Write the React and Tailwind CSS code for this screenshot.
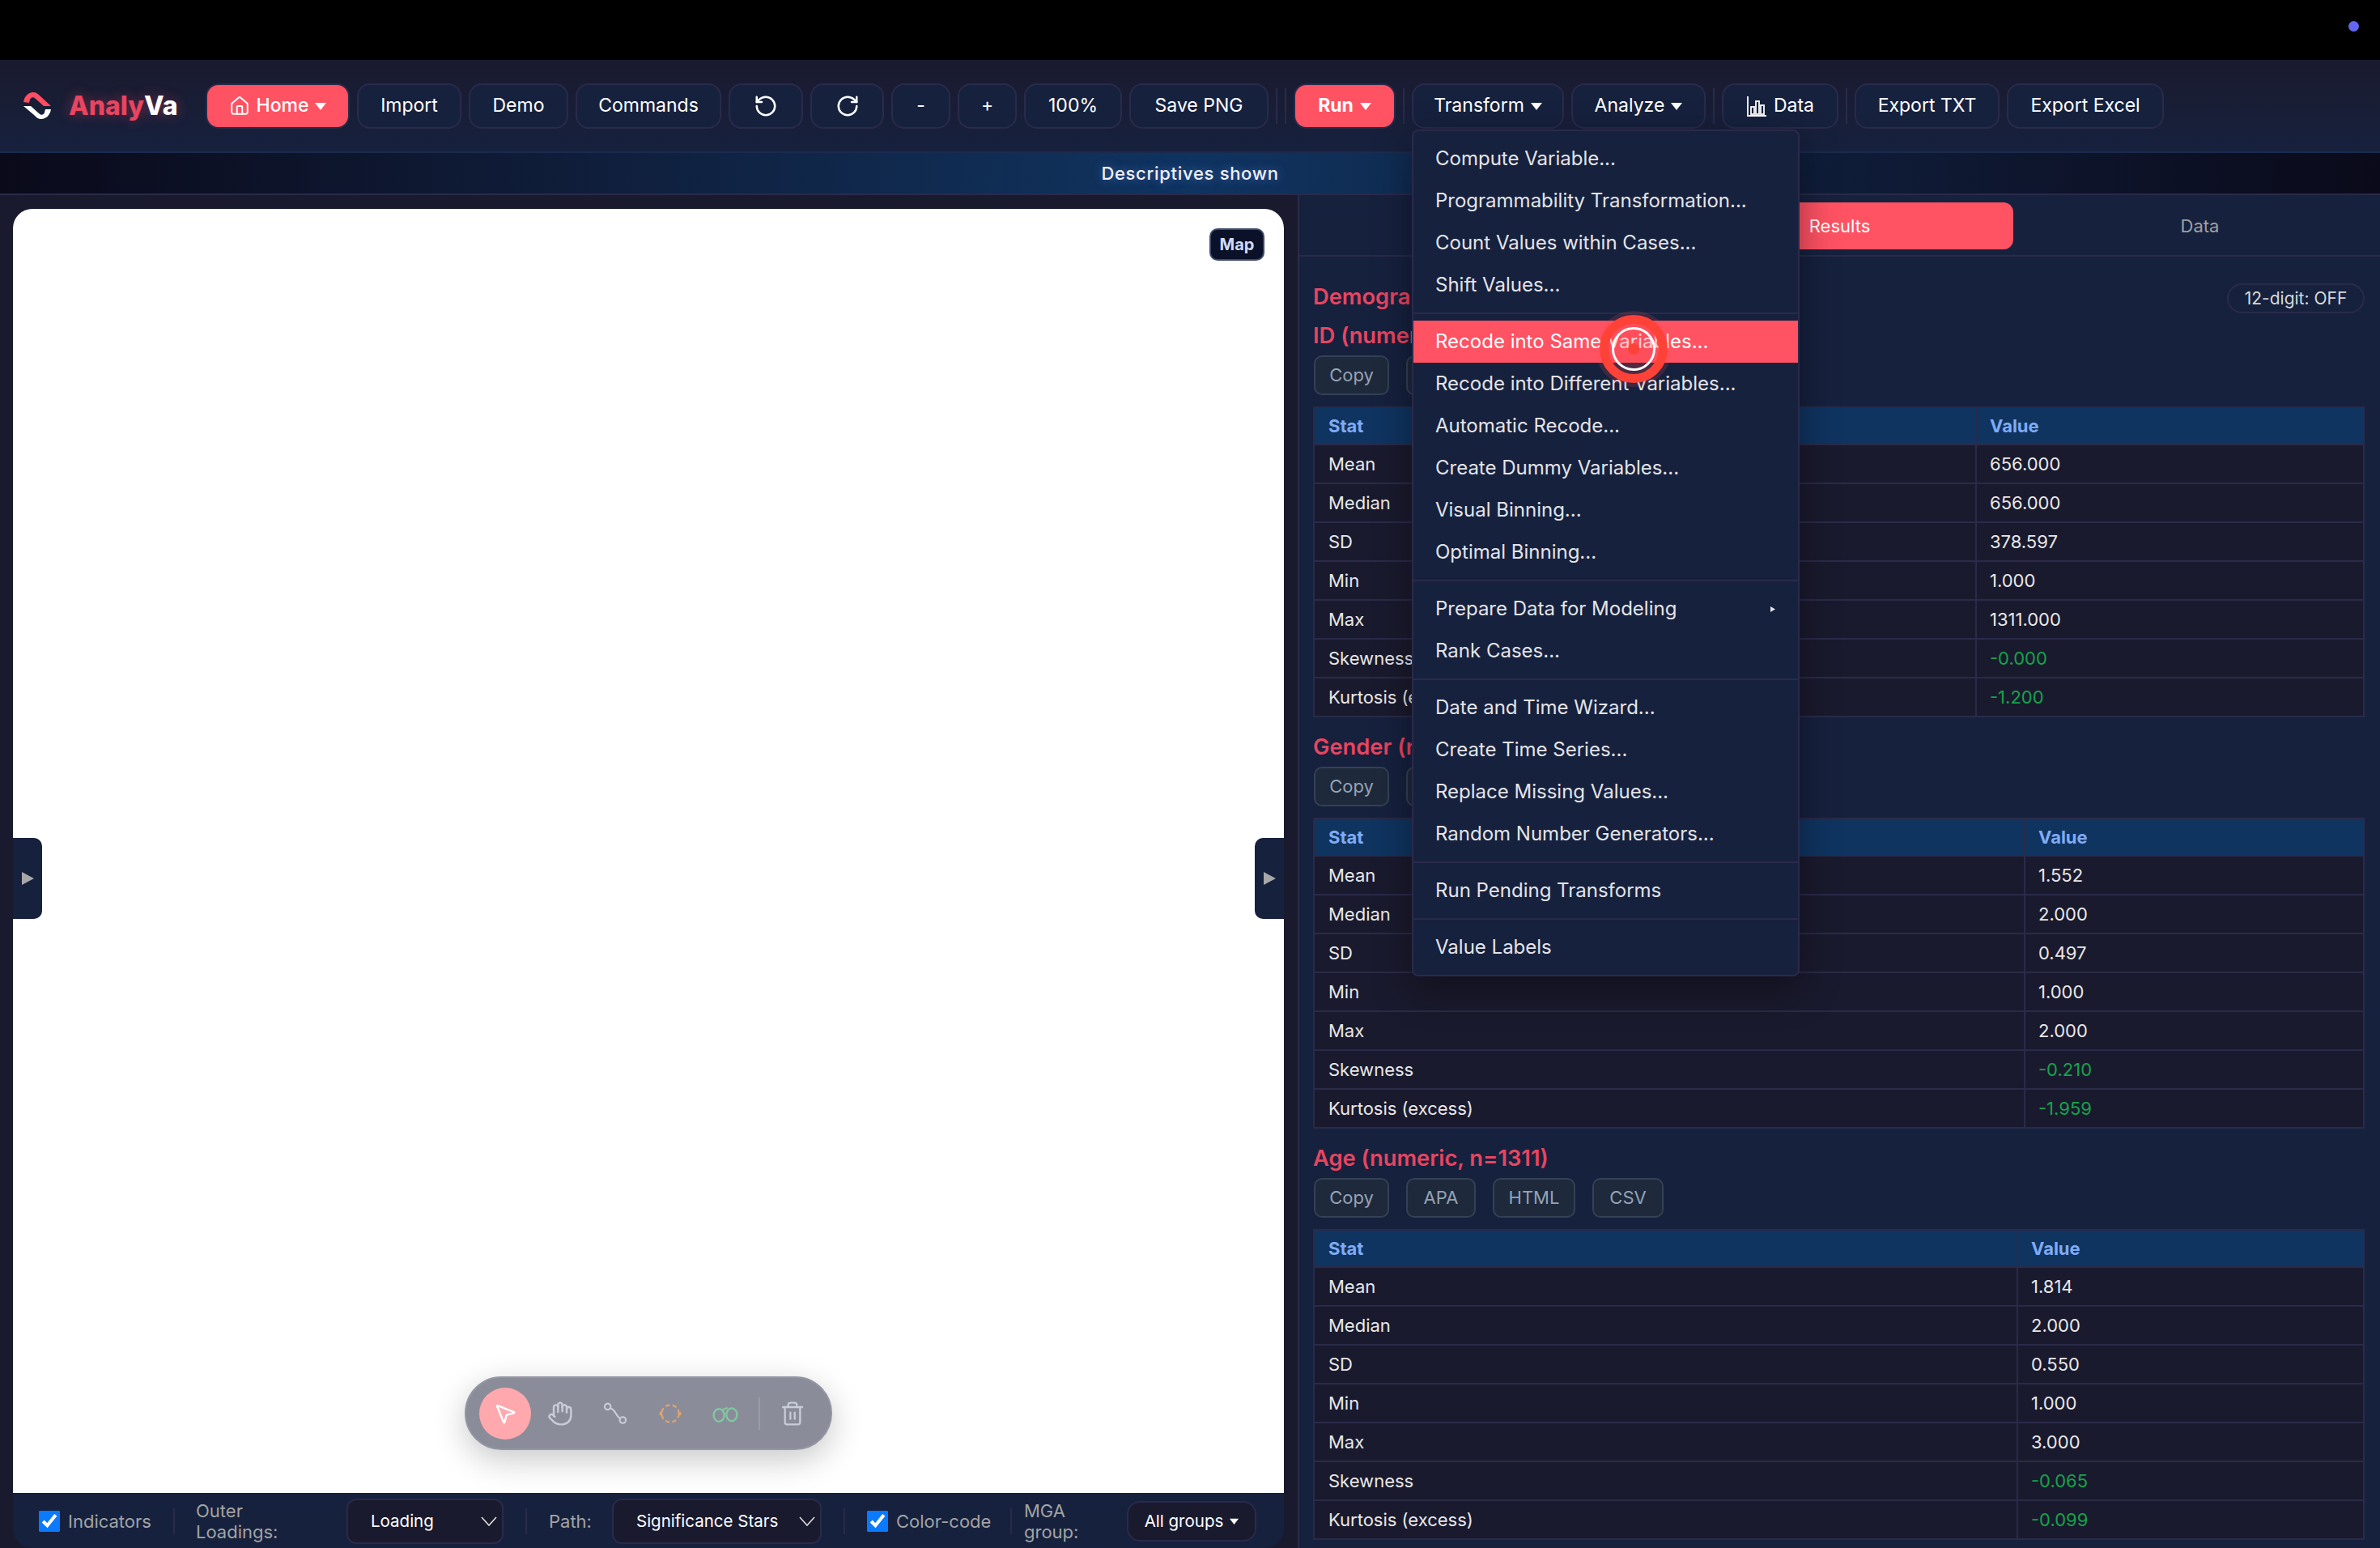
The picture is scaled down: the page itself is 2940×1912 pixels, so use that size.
import React from 'react';
import { House, RotateCcw, RotateCw, MousePointer2, Hand, Trash2 } from 'lucide-react';

const Caret = ({ className = '' }) => (
    <svg width="14" height="10" viewBox="0 0 14 10" className={className}>
        <path d="M0 1h14L7 10z" fill="currentColor" />
    </svg>
);

const SelectChevron = () => (
    <svg width="20" height="12" viewBox="0 0 20 12" fill="none" stroke="#dddddd" strokeWidth="1.6" className="shrink-0">
        <path d="M1 1l9 10 9-10" />
    </svg>
);

const SideArrow = () => (
    <svg width="15" height="16" viewBox="0 0 15 16"><path d="M0 0l15 8-15 8z" fill="currentColor" /></svg>
);

const Sep = () => <div className="w-[2px] h-[44px] bg-[#2a2a4a] shrink-0"></div>;

const Btn = ({ w, red, children }) => (
    <button className={`${w} h-[56px] shrink-0 flex items-center justify-center gap-[8px] rounded-[16px] border-2 text-[23px] ${red ? 'bg-[#ff5263] border-[#2a2a4a] font-bold text-white' : 'bg-[#16213e] border-[#2a2a4a] text-white'}`}>
        {children}
    </button>
);

const DataIcon = () => (
    <svg width="26" height="30" viewBox="0 0 26 30" fill="none" stroke="currentColor" strokeWidth="1.8">
        <path d="M2 3v24h23" />
        <rect x="6" y="16" width="4" height="9" />
        <rect x="12" y="9" width="4" height="16" />
        <rect x="18" y="14" width="4" height="11" />
    </svg>
);

const Logo = () => (
    <svg width="34" height="34" viewBox="0 0 34 34" className="shrink-0">
        <path d="M0 12C1 5 6 0 12 0c4 0 6 2 9 5l13 12h-9L15 8c-3-3-6-2-7 1l-1 4z" fill="#ff4d63" />
        <path d="M0 17h9l10 9c3 3 6 2 7-1l1-4h7c-1 7-6 12-12 12-4 0-6-2-9-5z" fill="#ffffff" />
    </svg>
);

const menuGroups = [
    ['Compute Variable...', 'Programmability Transformation...', 'Count Values within Cases...', 'Shift Values...'],
    ['Recode into Same Variables...', 'Recode into Different Variables...', 'Automatic Recode...', 'Create Dummy Variables...', 'Visual Binning...', 'Optimal Binning...'],
    ['Prepare Data for Modeling', 'Rank Cases...'],
    ['Date and Time Wizard...', 'Create Time Series...', 'Replace Missing Values...', 'Random Number Generators...'],
    ['Run Pending Transforms'],
    ['Value Labels'],
];

const sections = [
    { title: 'ID (numeric, n=1311)', col: 'w-[816px]', values: ['656.000', '656.000', '378.597', '1.000', '1311.000', '-0.000', '-1.200'] },
    { title: 'Gender (numeric, n=1311)', col: 'w-[876px]', values: ['1.552', '2.000', '0.497', '1.000', '2.000', '-0.210', '-1.959'] },
    { title: 'Age (numeric, n=1311)', col: 'w-[867px]', values: ['1.814', '2.000', '0.550', '1.000', '3.000', '-0.065', '-0.099'] },
];
const statNames = ['Mean', 'Median', 'SD', 'Min', 'Max', 'Skewness', 'Kurtosis (excess)'];

const StatSection = ({ section }) => (
    <div className="mb-[21px]">
        <h3 className="h-[32px] mb-[8px] flex items-center text-[27.3px] font-semibold text-[#e94560]">{section.title}</h3>
        <div className="flex gap-[21px] mb-[14px] ml-[1px]">
            {[['Copy', 'w-[93px]'], ['APA', 'w-[86px]'], ['HTML', 'w-[102px]'], ['CSV', 'w-[88px]']].map(([label, w]) => (
                <button key={label} className={`${w} h-[49px] rounded-[10px] border-2 border-[#334155] bg-[#1e293b] text-[22px] text-[#94a3b8]`}>{label}</button>
            ))}
        </div>
        <div className="border-2 border-b-0 border-[#2a2a4a]">
            <table className="w-full table-fixed border-separate border-spacing-0 text-[22px] text-[#e8e8e8]">
                <thead>
                    <tr className="bg-[#0f3460] text-[#7fabf5] font-bold text-left">
                        <th className={`${section.col} h-[46px] pl-[17px] pr-[16px] border-b-2 border-[#2a2a4a]`}>Stat</th>
                        <th className="h-[46px] px-[16px] border-b-2 border-l-2 border-[#2a2a4a]">Value</th>
                    </tr>
                </thead>
                <tbody>
                    {statNames.map((name, i) => (
                        <tr key={name} className="bg-[#1a1a2e]">
                            <td className="h-[48px] pl-[17px] pr-[16px] border-b-2 border-[#2a2a4a]">{name}</td>
                            <td className={`h-[48px] px-[16px] border-b-2 border-l-2 border-[#2a2a4a] ${i > 4 ? 'text-[#16a34a]' : ''}`}>{section.values[i]}</td>
                        </tr>
                    ))}
                </tbody>
            </table>
        </div>
    </div>
);

const App = () => {
    return (
        <div className="relative w-full h-screen overflow-hidden flex flex-col bg-[#1a1a2e] font-['Inter',sans-serif]">
            {/* top black strip */}
            <div className="h-[74px] shrink-0 bg-black flex justify-end items-center pr-[26px] pb-[10px]">
                <div className="w-[13px] h-[13px] rounded-full bg-[#6366f1]"></div>
            </div>

            {/* toolbar */}
            <div className="h-[113px] shrink-0 flex items-center gap-[9px] pl-[29px] bg-gradient-to-b from-[#1a1a2e] to-[#16213e]">
                <div className="w-[216px] shrink-0 flex items-center gap-[22px] text-[32px] font-extrabold [text-shadow:0_0_16px_rgba(233,69,96,0.45)]">
                    <Logo />
                    <span className="text-[#e94560]">Analy<span className="text-white">Va</span></span>
                </div>
                <Btn w="w-[178px]" red><House size={26} strokeWidth={1.8} /><span className="font-medium">Home</span><Caret /></Btn>
                <Btn w="w-[129px]">Import</Btn>
                <Btn w="w-[123px]">Demo</Btn>
                <Btn w="w-[180px]">Commands</Btn>
                <Btn w="w-[92px]"><RotateCcw size={30} strokeWidth={2} /></Btn>
                <Btn w="w-[91px]"><RotateCw size={30} strokeWidth={2} /></Btn>
                <Btn w="w-[73px]">-</Btn>
                <Btn w="w-[73px]">+</Btn>
                <Btn w="w-[121px]">100%</Btn>
                <Btn w="w-[172px]">Save PNG</Btn>
                <Sep />
                <Sep />
                <Btn w="w-[126px]" red>Run<Caret /></Btn>
                <Sep />
                <Btn w="w-[188px]">Transform<Caret /></Btn>
                <Btn w="w-[166px]">Analyze<Caret /></Btn>
                <Sep />
                <Btn w="w-[144px]"><DataIcon />Data</Btn>
                <Sep />
                <Btn w="w-[179px]">Export TXT</Btn>
                <Btn w="w-[194px]">Export Excel</Btn>
            </div>

            {/* status strip */}
            <div className="h-[54px] shrink-0 flex items-center justify-center border-y-2 border-[#1a2a4e] border-b-[#2a2a4a] bg-gradient-to-r from-[#0a0a1a] via-[#0f3460] to-[#0a0a1a] text-[22px] font-medium tracking-[0.7px] text-[#f0f0f5] [text-shadow:0_0_12px_rgba(120,150,255,0.5)]">
                Descriptives shown
            </div>

            <div className="flex-1 min-h-0 flex">
                {/* canvas column */}
                <div className="w-[1603px] shrink-0 pl-[16px] pr-[17px] pt-[17px] flex flex-col">
                    <div className="relative flex-1 bg-white rounded-t-[24px]">
                        <div className="absolute top-[24px] right-[24px] w-[68px] h-[40px] flex items-center justify-center rounded-[10px] border-2 border-[#3d4a68] bg-[#0a1128] text-[20px] font-bold text-[#cfdcf5]">Map</div>
                        <div className="absolute left-0 top-[777px] w-[36px] h-[100px] flex items-center justify-center rounded-r-[10px] bg-[#16213e] text-[#a8a8a8]">
                            <SideArrow />
                        </div>
                        <div className="absolute right-0 top-[777px] w-[36px] h-[100px] flex items-center justify-center rounded-l-[10px] bg-[#16213e] text-[#a8a8a8]">
                            <SideArrow />
                        </div>

                        {/* floating tool pill */}
                        <div className="absolute left-[558px] top-[1442px] w-[454px] h-[91px] flex items-center pl-[16px] rounded-full border-2 border-[#9396a3] bg-[#8a8d99] text-[#c9cdd9] shadow-[0_12px_40px_rgba(0,0,0,0.22)]">
                            <div className="w-[64px] h-[64px] rounded-full bg-[#ffa8ae] flex items-center justify-center text-white">
                                <MousePointer2 size={30} strokeWidth={2} />
                            </div>
                            <div className="w-[68px] ml-[2px] flex justify-center"><Hand size={32} strokeWidth={1.8} /></div>
                            <div className="w-[68px] flex justify-center">
                                <svg width="32" height="32" viewBox="0 0 24 24" fill="none" stroke="currentColor" strokeWidth="1.6">
                                    <circle cx="5" cy="5.5" r="2.8" />
                                    <circle cx="19" cy="18" r="2.8" />
                                    <path d="M7.5 7c3 1 4 3 5.5 5.5 1 1.7 2 3 3.4 4" />
                                </svg>
                            </div>
                            <div className="w-[68px] flex justify-center text-[#e0a272]">
                                <svg width="32" height="32" viewBox="0 0 24 24" fill="none" stroke="currentColor" strokeWidth="1.7">
                                    <circle cx="12" cy="12" r="8" strokeDasharray="4 2.6" />
                                    <rect x="2" y="10.5" width="2.6" height="3" fill="currentColor" stroke="none" />
                                    <rect x="19.4" y="10.5" width="2.6" height="3" fill="currentColor" stroke="none" />
                                </svg>
                            </div>
                            <div className="w-[68px] flex justify-center text-[#82c9a2]">
                                <svg width="34" height="32" viewBox="0 0 26 24" fill="none" stroke="currentColor" strokeWidth="1.7">
                                    <ellipse cx="7" cy="13.5" rx="5" ry="6" />
                                    <ellipse cx="19" cy="13" rx="5" ry="6" />
                                    <path d="M10 8.5l5-2" />
                                </svg>
                            </div>
                            <div className="w-[2px] h-[40px] ml-[7px] bg-[#9a9da9]"></div>
                            <div className="w-[80px] flex justify-center"><Trash2 size={32} strokeWidth={1.7} /></div>
                        </div>
                    </div>

                    {/* canvas options */}
                    <div className="h-[68px] shrink-0 flex items-center pl-[32px] pt-[2px] rounded-b-[24px] bg-[#16213e] text-[22px] text-[#a3a3a3]">
                        <input type="checkbox" readOnly checked className="w-[26px] h-[26px] accent-[#0a7aff] m-0" />
                        <span className="ml-[10px] w-[104px]">Indicators</span>
                        <div className="w-[2px] h-[32px] ml-[26px] bg-[#2a2a4a]"></div>
                        <span className="ml-[26px] w-[186px] leading-[26px]">Outer<br />Loadings:</span>
                        <div className="w-[194px] h-[56px] flex items-center justify-between pl-[28px] pr-[6px] rounded-[12px] border-2 border-[#2a2a4a] bg-[#1a1a2e] text-[20.5px] text-white">
                            Loading<SelectChevron />
                        </div>
                        <div className="w-[2px] h-[32px] ml-[27px] bg-[#2a2a4a]"></div>
                        <span className="ml-[27px] w-[78px]">Path:</span>
                        <div className="w-[259px] h-[56px] flex items-center justify-between pl-[28px] pr-[6px] rounded-[12px] border-2 border-[#2a2a4a] bg-[#1a1a2e] text-[20.5px] text-white">
                            Significance Stars<SelectChevron />
                        </div>
                        <div className="w-[2px] h-[32px] ml-[27px] bg-[#2a2a4a]"></div>
                        <input type="checkbox" readOnly checked className="w-[26px] h-[26px] accent-[#0a7aff] ml-[27px] m-0" />
                        <span className="ml-[10px] w-[115px] whitespace-nowrap">Color-code</span>
                        <div className="w-[2px] h-[32px] ml-[26px] bg-[#2a2a4a]"></div>
                        <span className="ml-[15px] w-[127px] leading-[26px]">MGA<br />group:</span>
                        <div className="w-[160px] h-[50px] flex items-center justify-center gap-[8px] rounded-[16px] border-2 border-[#2a2a4a] bg-[#1a1a2e] text-[20.5px] text-white">
                            All groups<Caret className="w-[11px]" />
                        </div>
                    </div>
                </div>

                {/* results panel */}
                <div className="flex-1 min-w-0 flex flex-col border-l-2 border-[#2a2a4a] bg-[#16213e]">
                    <div className="h-[76px] shrink-0 pt-[1px] flex items-center gap-[16px] px-[8px] border-b-2 border-[#2a2a4a] text-[22px]">
                        <div className="flex-1 h-[58px]"></div>
                        <div className="flex-1 h-[58px] pt-[2px] flex items-center justify-center rounded-[12px] bg-[#ff5263] text-white">Results</div>
                        <div className="flex-1 h-[58px] pt-[2px] flex items-center justify-center rounded-[12px] text-[#a0a0a0]">Data</div>
                    </div>
                    <div className="flex-1 min-h-0 overflow-hidden pt-[33px] pl-[17px] pr-[19px]">
                        <div className="flex items-start justify-between mb-[12px]">
                            <h2 className="mt-[1px] text-[27.3px] leading-[32px] font-semibold text-[#e94560]">Demographics</h2>
                            <div className="w-[170px] h-[37px] flex items-center justify-center rounded-full border-2 border-[#2a2a4a] text-[21px] text-[#d8d8d8]">12-digit: OFF</div>
                        </div>
                        {sections.map(section => <StatSection key={section.title} section={section} />)}
                    </div>
                </div>
            </div>

            {/* Transform dropdown */}
            <div className="absolute left-[1744px] top-[160px] w-[479px] py-[8px] rounded-[8px] border-2 border-[#2a2a4a] bg-[#16213e] text-[24px] text-[#e4e4e8] shadow-[0_16px_48px_rgba(0,0,0,0.4)]">
                {menuGroups.map((group, g) => (
                    <div key={g} className={g > 0 ? 'mt-[8px] pt-[8px] border-t-2 border-[#2a2a4a]' : ''}>
                        {group.map(item => (
                            <div key={item} className={`h-[52px] flex items-center justify-between pl-[27px] pr-[28px] ${item.startsWith('Recode into Same') ? 'bg-[#ff5263] text-white' : ''}`}>
                                {item}
                                {item.startsWith('Prepare') && <svg width="6" height="7" viewBox="0 0 6 7"><path d="M0 0l6 3.5L0 7z" fill="currentColor" /></svg>}
                            </div>
                        ))}
                    </div>
                ))}
            </div>

            {/* click marker from the recording */}
            <div className="absolute left-[1971px] top-[384px] w-[94px] h-[94px] rounded-full bg-[rgba(255,80,80,0.16)] flex items-center justify-center">
                <div className="w-[84px] h-[84px] rounded-full border-[11px] border-[#ff4238] bg-[rgba(255,60,60,0.12)] flex items-center justify-center">
                    <div className="w-[54px] h-[54px] rounded-full border-[3px] border-white flex items-center justify-center">
                        <div className="w-[14px] h-[14px] rounded-full bg-[#ff4238]"></div>
                    </div>
                </div>
            </div>
        </div>
    );
};

export default App;
